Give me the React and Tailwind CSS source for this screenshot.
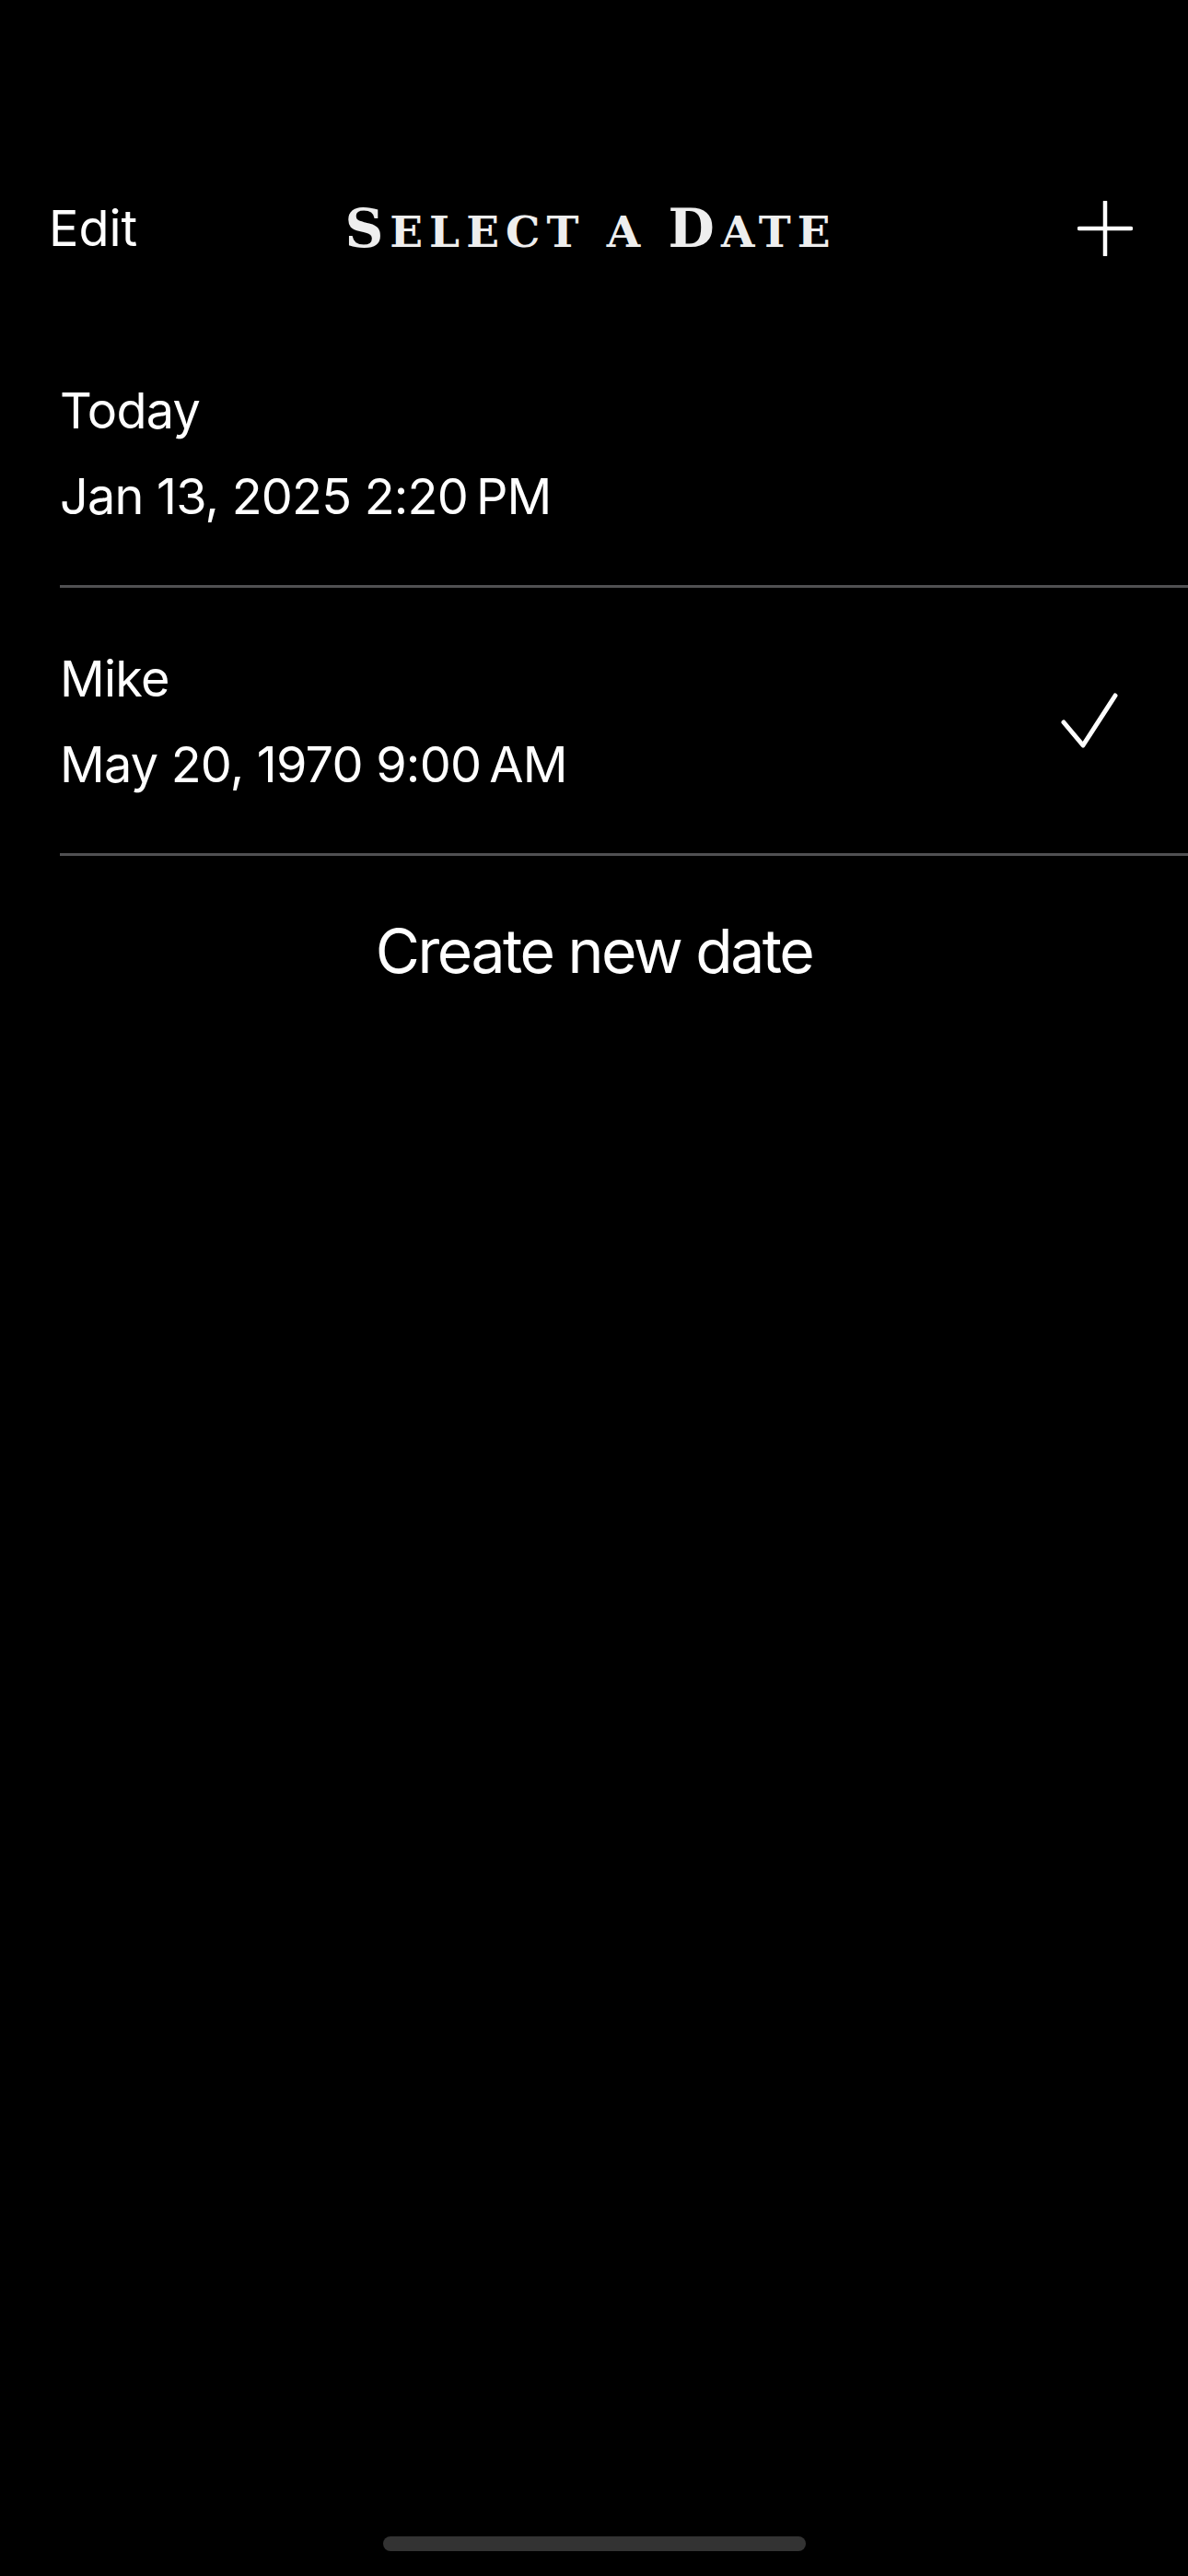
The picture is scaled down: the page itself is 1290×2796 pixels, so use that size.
import React from "react";

const dates = [
  { name: "Today", when: "Jan 13, 2025 2:20\u202FPM", selected: false },
  { name: "Mike", when: "May 20, 1970 9:00\u202FAM", selected: true },
];

function PlusIcon() {
  return (
    <svg width="60" height="60" viewBox="0 0 60 60" fill="none">
      <path d="M30 1v58M2 30h56" stroke="white" strokeWidth="4.5" strokeLinecap="round" />
    </svg>
  );
}

function CheckIcon() {
  return (
    <svg width="64" height="64" viewBox="0 0 64 64" fill="none">
      <path d="M4 33l21 25L60 4" stroke="white" strokeWidth="5" strokeLinecap="round" strokeLinejoin="round" />
    </svg>
  );
}

function Title() {
  return (
    <h1 className="font-['DejaVu_Serif',serif] font-bold text-[#eeeeee] tracking-[7px] leading-none whitespace-nowrap">
      <span className="text-[58px]">S</span>
      <span className="text-[47px]">ELECT</span>
      <span className="text-[47px]"> A </span>
      <span className="text-[58px]">D</span>
      <span className="text-[47px]">ATE</span>
    </h1>
  );
}

export default function App() {
  return (
    <div className="relative w-[1290px] h-[2796px] bg-black text-white font-['Inter',sans-serif] overflow-hidden">
      {/* Header */}
      <div className="pt-[198px] mb-[49px]">
        <div className="h-[100px] flex items-center justify-between pl-[53px] pr-[60px]">
          <button className="text-[54px] leading-none w-[200px] text-left">Edit</button>
          <Title />
          <div className="w-[200px] flex justify-end">
            <PlusIcon />
          </div>
        </div>
      </div>

      {/* List */}
      <div className="pl-[65px]">
        {dates.map((d) => (
          <div key={d.name}>
            <div className="flex items-center justify-between pt-[52px] pb-[50px] pr-[75px]">
              <div className="text-[54px] leading-[93px] tracking-[-0.8px]">
                <div>{d.name}</div>
                <div>{d.when}</div>
              </div>
              {d.selected && <CheckIcon />}
            </div>
            <div className="h-[3px] bg-[#505052]" />
          </div>
        ))}
      </div>

      <div className="mt-[70px] text-center text-[66px] leading-none tracking-[-2.5px]">
        Create new date
      </div>

      {/* Home indicator */}
      <div className="absolute left-[416px] top-[2753px] w-[459px] h-[16px] rounded-full bg-[#333333]" />
    </div>
  );
}
